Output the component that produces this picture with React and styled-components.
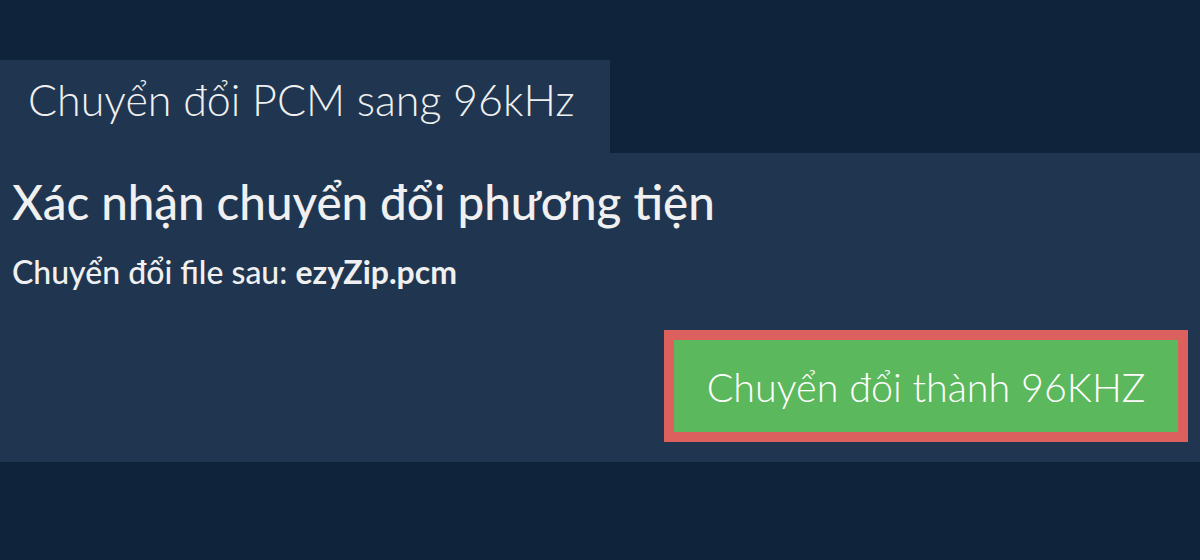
import styled, { createGlobalStyle } from "styled-components";

const GlobalStyle = createGlobalStyle`
    html, body {
        margin: 0;
        padding: 0;
        background-color: #0f233a;
        font-family: Lato, "Noto Sans", sans-serif;
        color: #f0f0f0;
    }
`;

const Page = styled.div`
    padding-top: 60px;
    height: 500px;
`;

const Tab = styled.div`
    display: inline-block;
    width: 610px;
    box-sizing: border-box;
    height: 93px;
    padding: 14px 0 0 28px;
    background-color: #203650;
    font-size: 43px;
    font-weight: 300;
    line-height: 52px;
`;

const Panel = styled.div`
    background-color: #203650;
    padding: 21px 12px 20px 12px;
    display: flex;
    flex-direction: column;
`;

const Heading = styled.h1`
    margin: 0;
    font-size: 47.5px;
    font-weight: 500;
    line-height: 56px;
`;

const FileLine = styled.p`
    margin: 24px 0 0 0;
    font-size: 32px;
    font-weight: 500;
    line-height: 36px;
    b {
        font-weight: 700;
    }
`;

const Actions = styled.div`
    display: flex;
    justify-content: flex-end;
    margin-top: 40px;
`;

const ConvertButton = styled.button`
    font: inherit;
    font-size: 39.5px;
    font-weight: 300;
    color: #ffffff;
    background-color: #5cb85c;
    border: 10px solid #dc605d;
    width: 524px;
    height: 112px;
    padding: 0;
    cursor: pointer;
`;

function App() {
    return (
        <Page>
            <GlobalStyle />
            <Tab>Chuyển đổi PCM sang 96kHz</Tab>
            <Panel>
                <Heading>Xác nhận chuyển đổi phương tiện</Heading>
                <FileLine>Chuyển đổi file sau: <b>ezyZip.pcm</b></FileLine>
                <Actions>
                    <ConvertButton>Chuyển đổi thành 96KHZ</ConvertButton>
                </Actions>
            </Panel>
        </Page>
    );
}

export default App;
